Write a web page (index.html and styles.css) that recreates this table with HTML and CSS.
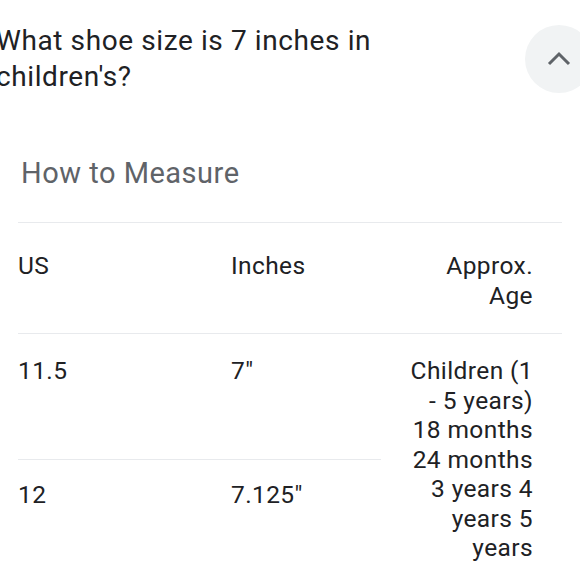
FILE: index.html
```html
<!DOCTYPE html>
<html>
<head>
<meta charset="utf-8">
<link rel="stylesheet" href="styles.css">
</head>
<body>
<div class="page">
  <div class="qrow">
    <h1 class="question">What shoe size is 7 inches in children's?</h1>
    <div class="toggle" aria-label="Collapse">
      <svg width="24" height="24" viewBox="0 0 24 24"><path d="M2 17 L12 7 L22 17" fill="none" stroke="#5f6368" stroke-width="3"/></svg>
    </div>
  </div>
  <div class="answer">
    <h2 class="subtitle">How to Measure</h2>
    <div class="table">
      <div class="cell head">US</div>
      <div class="cell head">Inches</div>
      <div class="cell head age">Approx.<br>Age</div>
      <div class="cell r1">11.5</div>
      <div class="cell r1">7"</div>
      <div class="cell r1 age span">Children (1<br>- 5 years)<br>18 months<br>24 months<br>3 years 4<br>years 5<br>years</div>
      <div class="cell r2">12</div>
      <div class="cell r2">7.125"</div>
    </div>
  </div>
</div>
</body>
</html>
```
FILE: styles.css
```css
html, body {
  margin: 0;
  padding: 0;
  background: #ffffff;
  overflow: hidden;
}
.page {
  width: 580px;
  height: 580px;
  overflow: hidden;
  font-family: Roboto, "Liberation Sans", sans-serif;
  color: #202124;
}
.qrow {
  display: flex;
  align-items: flex-start;
}
.question {
  margin: 23px 0 0 -4px;
  width: 440px;
  font-size: 28px;
  font-weight: 400;
  line-height: 36px;
  letter-spacing: 0.6px;
  color: #202124;
}
.toggle {
  margin: 25px -13px 0 auto;
  width: 68px;
  height: 68px;
  flex: none;
  border-radius: 50%;
  background: #f1f3f4;
  display: flex;
  align-items: center;
  justify-content: center;
}
.answer {
  padding: 0 18px;
}
.subtitle {
  margin: 60px 0 0 3px;
  font-size: 29px;
  font-weight: 400;
  line-height: 36px;
  letter-spacing: 0.5px;
  color: #5f6368;
}
.table {
  margin-top: 31px;
  display: grid;
  grid-template-columns: 213px 150px 181px;
  grid-template-rows: auto 126px auto;
  font-size: 24.5px;
  line-height: 29.5px;
  letter-spacing: 0.4px;
}
.cell {
  border-top: 1px solid #e8eaed;
}
.head {
  padding: 28px 0 23px;
}
.r1 {
  padding-top: 22px;
}
.r2 {
  padding-top: 20px;
  padding-bottom: 20px;
}
.age {
  text-align: right;
  padding-right: 29px;
}
.span {
  grid-column: 3;
  grid-row: 2 / span 2;
}
```
